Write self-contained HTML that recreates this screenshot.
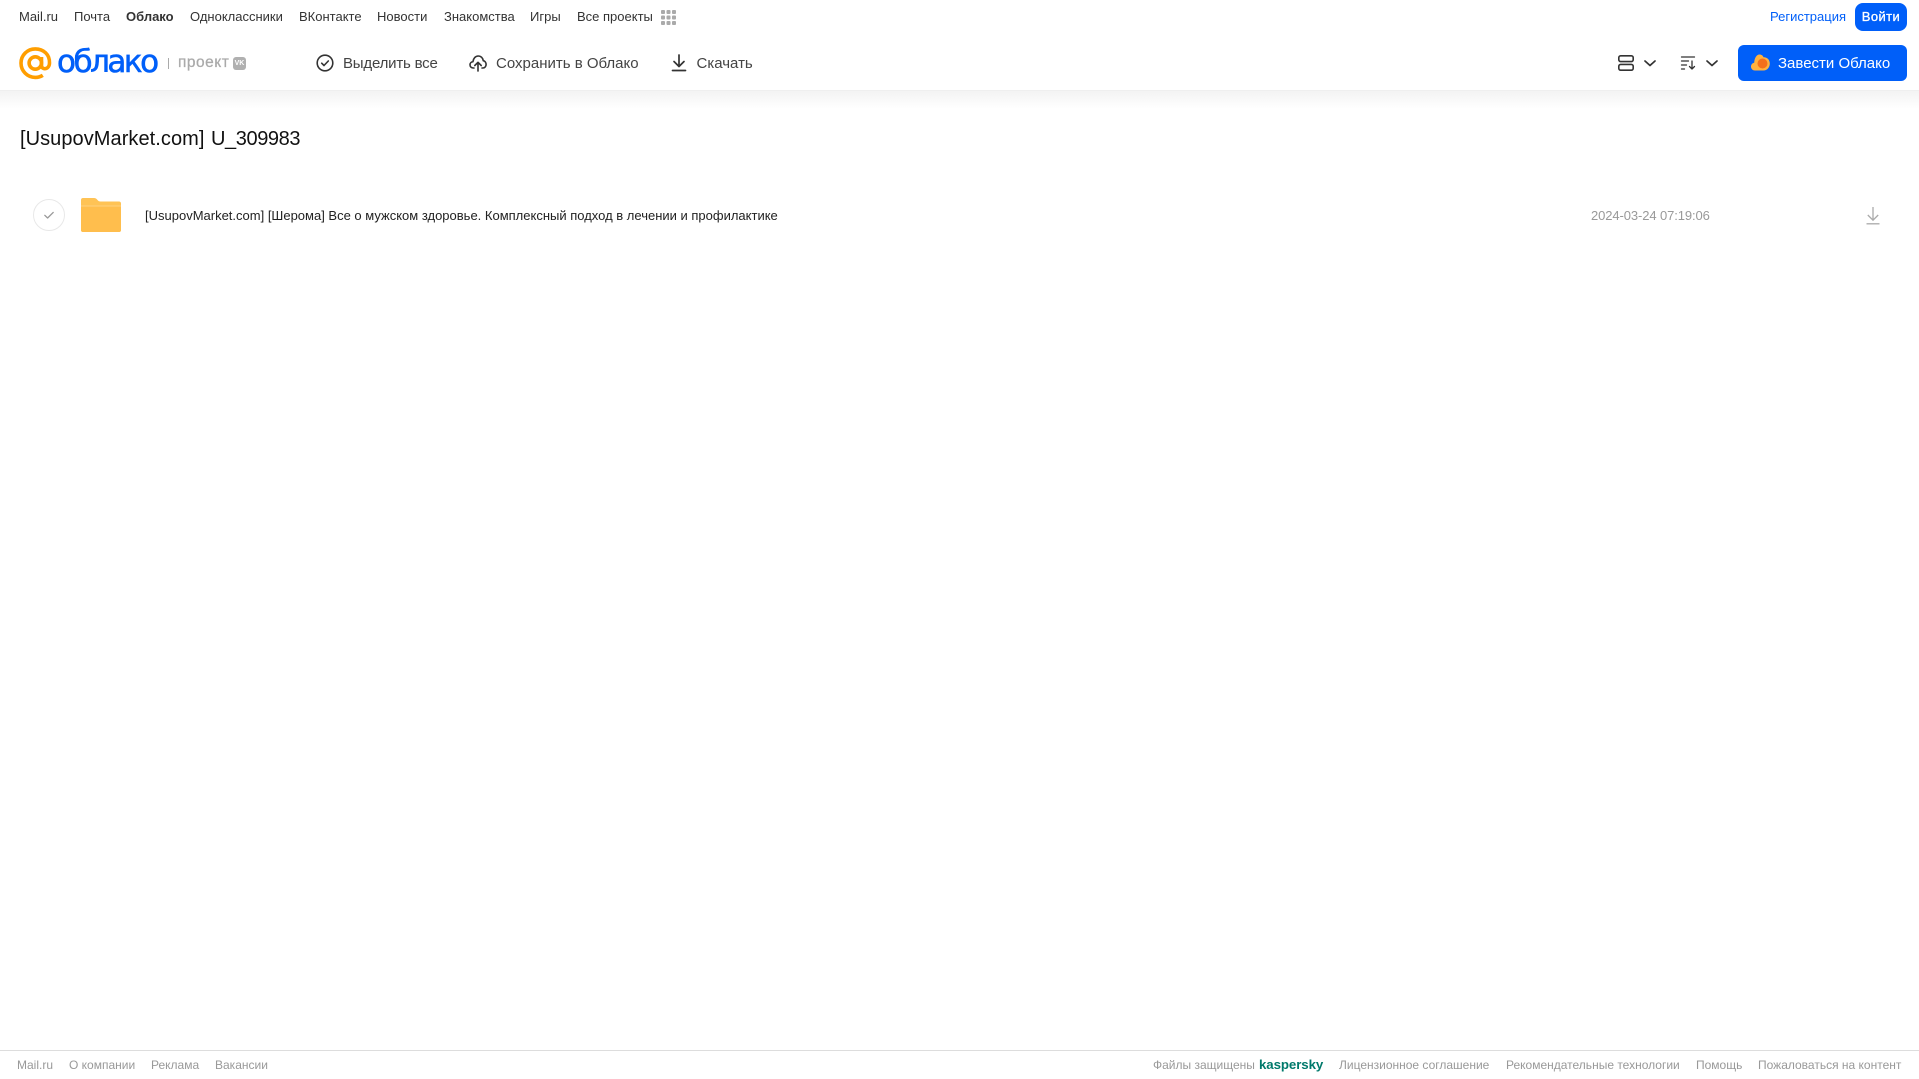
<!DOCTYPE html>
<html lang="ru"><head><meta charset="utf-8"><title>Облако</title>
<style>
html,body{margin:0;padding:0;background:#fff;width:1919px;height:1079px;overflow:hidden}
body{position:relative;font-family:"Liberation Sans",Arial,sans-serif}
.t{position:absolute;white-space:nowrap;line-height:16px}
.n{top:9px;font-size:13px;color:#333}
.h{top:55px;font-size:15px;color:#444;line-height:18px}
.f{top:1057px;font-size:12px;color:#999}
svg{position:absolute;overflow:visible}
</style></head><body>
<div style="position:absolute;left:0;top:91px;width:1919px;height:18px;background:linear-gradient(#f3f3f3,#fff)"></div>
<div style="position:absolute;left:0;top:90px;width:1919px;height:1px;background:#efefef"></div>

<span class="t n" style="left:19px">Mail.ru</span>
<span class="t n" style="left:74px">Почта</span>
<span class="t n" style="left:126px;font-weight:bold">Облако</span>
<span class="t n" style="left:190px">Одноклассники</span>
<span class="t n" style="left:299px">ВКонтакте</span>
<span class="t n" style="left:377px">Новости</span>
<span class="t n" style="left:444px">Знакомства</span>
<span class="t n" style="left:530px">Игры</span>
<span class="t n" style="left:577px">Все проекты</span>
<svg style="left:661px;top:10px" width="15" height="15" fill="#aaa"><rect x="0" y="0" width="4" height="4" rx="1"/><rect x="5.500" y="0" width="4" height="4" rx="1"/><rect x="11" y="0" width="4" height="4" rx="1"/><rect x="0" y="5.500" width="4" height="4" rx="1"/><rect x="5.500" y="5.500" width="4" height="4" rx="1"/><rect x="11" y="5.500" width="4" height="4" rx="1"/><rect x="0" y="11" width="4" height="4" rx="1"/><rect x="5.500" y="11" width="4" height="4" rx="1"/><rect x="11" y="11" width="4" height="4" rx="1"/></svg>
<span class="t n" style="left:1770px;color:#005ff9">Регистрация</span>
<div style="position:absolute;left:1855px;top:3px;width:52px;height:28px;border-radius:8px;background:#005ff9;color:#fff;font-size:13px;line-height:28px;text-align:center;letter-spacing:.4px;-webkit-text-stroke:.3px #fff">Войти</div>

<svg style="left:19px;top:47px" width="33" height="33" viewBox="0 0 33 33" fill="none" stroke="#ff9e00" stroke-width="3.600"><circle cx="16.300" cy="16" r="6.200"/><path d="M22.500 10v8.500c0 4.600 7.800 4.600 8-2.500C30.800 7.500 24.500 1.900 16.300 1.900 8.300 1.900 2 8.200 2 16.100s6.400 14.300 14.300 14.300c2.900 0 5.300-.7 7.500-2.100"/></svg>
<span class="t" style="left:57px;top:42px;font-size:31px;line-height:40px;color:#005ff9;font-family:'DejaVu Sans',sans-serif;letter-spacing:-2.500px;-webkit-text-stroke:.6px #005ff9">облако</span>
<div style="position:absolute;left:168px;top:58px;width:1px;height:11px;background:#aaa"></div>
<span class="t" style="left:178px;top:54px;font-size:15.500px;line-height:18px;color:#aaa;letter-spacing:.5px;-webkit-text-stroke:.25px #aaa">проект</span>
<div style="position:absolute;left:233px;top:57px;width:13px;height:13px;border-radius:3px;background:#b0b0b0;color:#fff;font-size:7px;font-weight:bold;line-height:13px;text-align:center">VK</div>

<svg style="left:316px;top:54px" width="18" height="18" viewBox="0 0 18 18" fill="none" stroke="#333" stroke-width="1.600"><circle cx="9" cy="9" r="7.800"/><path d="M5.700 9.200l2.300 2.300 4.300-4.500" stroke-linecap="round" stroke-linejoin="round"/></svg>
<span class="t h" style="left:343px;letter-spacing:-.2px">Выделить все</span>
<svg style="left:469px;top:54px" width="18" height="18" viewBox="0 0 18 18" fill="none" stroke="#333" stroke-width="1.600" stroke-linecap="round" stroke-linejoin="round"><path d="M5 14H4.300C2.300 14 1 12.500 1 10.800c0-1.700 1.300-3 2.900-3.100C4.400 4.300 6.500 2 9.200 2c2.700 0 4.700 2 5.100 4.700 1.600.3 2.800 1.900 2.800 3.800 0 2-1.400 3.500-3.100 3.500H13"/><path d="M9 17V8.500M5.800 11.500L9 8.300l3.200 3.200"/></svg>
<span class="t h" style="left:496px">Сохранить в Облако</span>
<svg style="left:671px;top:54px" width="16" height="18" viewBox="0 0 16 18" fill="none" stroke="#333" stroke-width="1.700" stroke-linecap="round" stroke-linejoin="round"><path d="M8 1v11M3 7.500l5 5 5-5"/><path d="M1.500 16.500h13"/></svg>
<span class="t h" style="left:696.500px">Скачать</span>

<svg style="left:1618px;top:55px" width="16" height="16" viewBox="0 0 16 16" fill="none" stroke="#333" stroke-width="1.600"><rect x=".8" y=".8" width="14.400" height="5.800" rx="1.800"/><rect x=".8" y="9.400" width="14.400" height="5.800" rx="1.800"/></svg>
<svg style="left:1644px;top:60px" width="12" height="7" fill="none" stroke="#333" stroke-width="1.700" stroke-linecap="round" stroke-linejoin="round"><path d="M1 1l5 4.500L11 1"/></svg>
<svg style="left:1681px;top:56px" width="16" height="14" viewBox="0 0 16 14" fill="none" stroke="#333" stroke-width="1.300" stroke-linecap="round" stroke-linejoin="round"><path d="M.5 1h13M.5 5h7M.5 9h5M.5 13h3M11 5v8M8.500 10.500L11 13l2.500-2.500"/></svg>
<svg style="left:1706px;top:60px" width="12" height="7" fill="none" stroke="#333" stroke-width="1.700" stroke-linecap="round" stroke-linejoin="round"><path d="M1 1l5 4.500L11 1"/></svg>
<div style="position:absolute;left:1738px;top:45px;width:169px;height:36px;border-radius:6px;background:#005ff9"></div>
<svg style="left:1751px;top:54px" width="19" height="17" viewBox="0 0 19 17"><path d="M4 16.500C1.700 16.500 0 14.800 0 12.500c0-2 1.400-3.500 3.200-3.800C3.500 4 5.500.5 8.500.5c2 0 3.400 1.200 4 2.700C16 3 18.800 5.500 18.800 9.500c0 4-2.800 7-6.300 7z" fill="#ffb23f"/><circle cx="11.500" cy="9.500" r="5" fill="#f4701b"/></svg>
<span class="t h" style="left:1778px;color:#fff">Завести Облако</span>

<span class="t" style="left:20px;top:126px;font-size:20px;line-height:26px;color:#111;letter-spacing:.06px">[UsupovMarket.com]</span>
<span class="t" style="left:211px;top:126px;font-size:20px;line-height:26px;color:#111;letter-spacing:-.4px">U_309983</span>

<svg style="left:33px;top:199px" width="32" height="32" fill="none"><circle cx="16" cy="16" r="15.500" stroke="#e8e8e8"/><path d="M11.800 16.300l2.800 2.700 5.600-5.600" stroke="#999" stroke-width="1.300" stroke-linecap="round" stroke-linejoin="round"/></svg>
<svg style="left:81px;top:198px" width="40" height="34" viewBox="0 0 40 34"><path d="M2 0h11c1.500 0 2.500.7 3.500 2 .8 1 1.600 1.500 3 1.500H38c1.200 0 2 .8 2 2V32c0 1.200-.8 2-2 2H2c-1.200 0-2-.8-2-2V2C0 .8.800 0 2 0z" fill="#ffc355"/><path d="M0 8.500h40V32c0 1.200-.8 2-2 2H2c-1.200 0-2-.8-2-2z" fill="#ffbe4d"/><rect y="7.500" width="40" height="1" fill="#ffd27f"/></svg>
<span class="t" style="left:145px;top:208px;font-size:13px;color:#222">[UsupovMarket.com] [Шерома] Все о мужском здоровье. Комплексный подход в лечении и профилактике</span>
<span class="t" style="left:1591px;top:208px;font-size:13px;color:#999;letter-spacing:-.1px">2024-03-24 07:19:06</span>
<svg style="left:1866px;top:206px" width="14" height="19" viewBox="0 0 14 19" fill="none" stroke="#aaa" stroke-width="1.300"><path d="M7 1v13M1.800 9L7 14.200 12.200 9"/><path d="M.5 17.800h13"/></svg>

<div style="position:absolute;left:0;top:1050px;width:1919px;height:1px;background:#ddd"></div>
<span class="t f" style="left:17px">Mail.ru</span>
<span class="t f" style="left:69px">О компании</span>
<span class="t f" style="left:151px">Реклама</span>
<span class="t f" style="left:215px">Вакансии</span>
<span class="t f" style="left:1153px">Файлы защищены</span>
<span class="t f" style="left:1259px;font-size:13.300px;font-weight:bold;color:#00796b;letter-spacing:-.1px">kaspersky</span>
<span class="t f" style="left:1339px">Лицензионное соглашение</span>
<span class="t f" style="left:1506px">Рекомендательные технологии</span>
<span class="t f" style="left:1696px">Помощь</span>
<span class="t f" style="left:1758px">Пожаловаться на контент</span>
</body></html>
